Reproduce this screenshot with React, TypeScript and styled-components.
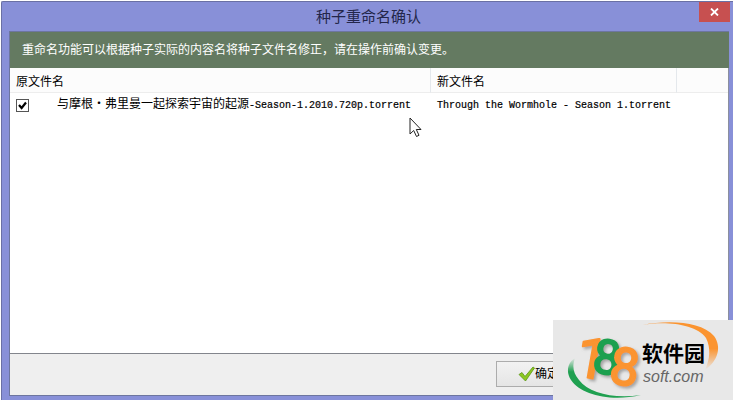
import React, { useState } from "react";
import styled, { createGlobalStyle } from "styled-components";

const GlobalStyle = createGlobalStyle`
  * { box-sizing: border-box; }
  body {
    margin: 0;
    background: #fff;
    font: 12px/16px "Liberation Sans", "Noto Sans CJK SC", sans-serif;
    color: #000;
  }
`;

const Dialog = styled.main`
  display: flex;
  flex-direction: column;
  min-height: calc(100vh - 1px);
  padding: 0 3px 4px 7px;
  background: #8890d8;
  border: 1px solid #6a70a4;
  border-width: 1px 0 0 1px;
  border-top-left-radius: 2px;
`;

const Page = styled.div`
  padding: 1px 0 0 1px;
`;

const TitleBar = styled.header`
  display: grid;
  grid-template-columns: 1fr auto 1fr;
  height: 29px;
`;

const Title = styled.h1`
  grid-column: 2;
  margin: 0;
  padding-right: 2px;
  font: 15px/28px "Noto Sans CJK SC", sans-serif;
  color: #23264a;
`;

const CloseButton = styled.button`
  justify-self: end;
  display: flex;
  align-items: center;
  justify-content: center;
  width: 31px;
  height: 20px;
  padding: 0;
  border: 0;
  background: #c75050;
`;

const Client = styled.section`
  display: flex;
  flex: 1;
  flex-direction: column;
  margin-right: 1px;
  background: #efefef;
  border: 1px solid #6d769f;
  border-width: 1px 0 1px 1px;
`;

const Notice = styled.p`
  margin: 0;
  padding: 10px 12px;
  background: #647a61;
  color: #fff;
`;

const ListArea = styled.div`
  flex: 1;
  background: #fff;
  border-right: 1px solid #8b8f9e;
  border-bottom: 1px solid #82858c;
`;

const Table = styled.table`
  width: 100%;
  table-layout: fixed;
  border-collapse: separate;
  border-spacing: 0;
`;

const Column = styled.col<{ $width?: number }>`
  width: ${({ $width }) => ($width ? `${$width}px` : "auto")};
`;

const HeadCell = styled.th<{ $last?: boolean }>`
  height: 25px;
  padding: 3px 6px 0;
  background: #fcfcfc;
  border-bottom: 1px solid #ededed;
  border-right: ${({ $last }) => ($last ? "0" : "1px solid #e4e8ec")};
  font-weight: 400;
  text-align: left;
`;

const Cell = styled.td`
  height: 24px;
  padding: 0 6px;
  white-space: nowrap;
`;

const FileLabel = styled.label`
  display: flex;
  align-items: center;
  gap: 28px;
`;

const CheckBox = styled.input`
  appearance: none;
  width: 13px;
  height: 13px;
  margin: 0;
  border: 1px solid #555;
  background: #fff;
  &:checked {
    background: url("data:image/svg+xml,%3Csvg xmlns='http://www.w3.org/2000/svg' viewBox='0 0 11 11'%3E%3Cpath d='M2 5l2.6 3L9 2.5' fill='none' stroke='%23000' stroke-width='2.2'/%3E%3C/svg%3E");
  }
`;

const Mono = styled.span`
  font: 10px/16px "Liberation Mono", monospace;
  -webkit-text-stroke: 0.2px #000;
`;

const Footer = styled.footer`
  display: flex;
  justify-content: flex-end;
  padding: 7px 148px 8px 8px;
`;

const ConfirmButton = styled.button`
  display: flex;
  align-items: center;
  justify-content: center;
  width: 85px;
  height: 26px;
  padding: 0;
  border: 1px solid #acacac;
  background: linear-gradient(#f2f2f2, #e5e5e5);
  font: inherit;
  color: #000;
`;

const Watermark = styled.aside`
  position: fixed;
  right: 0;
  bottom: 0;
  width: 180px;
  height: 80px;
  background: #e8e8e8;
`;

const Pointer = styled.svg`
  position: absolute;
  left: 409px;
  top: 117px;
  pointer-events: none;
`;

function SiteLogo() {
  return (
    <svg width="180" height="80" viewBox="0 0 180 80" role="img" aria-label="188软件园 soft.com">
      <defs>
        <linearGradient id="greenArc" x1="0" y1="0" x2="0" y2="1">
          <stop offset="0" stopColor="#1fa050" stopOpacity="0" />
          <stop offset="0.35" stopColor="#1fa050" />
        </linearGradient>
        <linearGradient id="orangeArc" x1="0" y1="0" x2="0" y2="1">
          <stop offset="0.55" stopColor="#fb9430" />
          <stop offset="1" stopColor="#fb9430" stopOpacity="0" />
        </linearGradient>
        <filter id="shade" x="-20%" y="-20%" width="150%" height="150%">
          <feDropShadow dx="2" dy="2" stdDeviation="1.5" floodColor="#777" floodOpacity="0.6" />
        </filter>
      </defs>
      <path d="M22 38C14 43 13 53 18 60C28 75 58 82 88 75C60 79 36 73 26 60C20 53 19 46 22 38Z" fill="url(#greenArc)" />
      <path d="M89 5C115 0 148 1 161 16C169 27 165 41 152 50C157 39 158 28 153 18C143 4 113 1 89 5Z" fill="url(#orangeArc)" />
      <g
        filter="url(#shade)"
        fontFamily="Roboto, sans-serif"
        fontWeight="400"
        strokeLinejoin="round"
        strokeWidth="2"
        textAnchor="middle"
      >
        <text x="39" y="58" fontSize="56" fill="#fb9430" stroke="#fb9430" transform="rotate(10 39 38)">1</text>
        <text x="54" y="54" fontSize="48" fill="#1fa050" stroke="#1fa050" transform="rotate(8 54 37)">8</text>
        <text x="72" y="65" fontSize="52" fill="#fb9430" stroke="#fb9430" transform="rotate(8 72 46)">8</text>
      </g>
      <text x="89" y="41" fontFamily="Noto Sans CJK SC, sans-serif" fontWeight="700" fontSize="21">软件园</text>
      <text x="90" y="62" fontFamily="Liberation Sans, sans-serif" fontStyle="italic" fontSize="16" fill="#666">soft.com</text>
    </svg>
  );
}

export default function App() {
  const [checked, setChecked] = useState(true);
  return (
    <Page>
      <GlobalStyle />
      <Dialog>
        <TitleBar>
          <Title>种子重命名确认</Title>
          <CloseButton aria-label="关闭">
            <svg width="9" height="8" viewBox="0 0 9 8">
              <path d="M1 .5L8 7.5M8 .5L1 7.5" stroke="#fff" strokeWidth="1.8" />
            </svg>
          </CloseButton>
        </TitleBar>
        <Client>
          <Notice>重命名功能可以根据种子实际的内容名将种子文件名修正，请在操作前确认变更。</Notice>
          <ListArea>
            <Table>
              <colgroup>
                <Column $width={421} />
                <Column $width={246} />
                <Column />
              </colgroup>
              <thead>
                <tr>
                  <HeadCell>原文件名</HeadCell>
                  <HeadCell>新文件名</HeadCell>
                  <HeadCell $last />
                </tr>
              </thead>
              <tbody>
                <tr>
                  <Cell>
                    <FileLabel>
                      <CheckBox type="checkbox" checked={checked} onChange={(e) => setChecked(e.target.checked)} />
                      <span lang="zh-CN">
                        与摩根・弗里曼一起探索宇宙的起源<Mono>-Season-1.2010.720p.torrent</Mono>
                      </span>
                    </FileLabel>
                  </Cell>
                  <Cell><Mono>Through the Wormhole - Season 1.torrent</Mono></Cell>
                  <Cell />
                </tr>
              </tbody>
            </Table>
          </ListArea>
          <Footer>
            <ConfirmButton>
              <svg width="17" height="16" viewBox="0 0 17 16">
                <path d="M1 8.5L4 6.5L7 10.5L15 1L16.5 2L7.5 15Z" fill="#8cc820" stroke="#5c9618" strokeWidth=".8" />
              </svg>
              确定
            </ConfirmButton>
          </Footer>
        </Client>
      </Dialog>
      <Watermark><SiteLogo /></Watermark>
      <Pointer width="13" height="21" viewBox="0 0 13 21">
        <path d="M1 1V17L4.7 13.5L7.5 19.5L10 18.3L7.3 12.5H12Z" fill="#fff" stroke="#222" />
      </Pointer>
    </Page>
  );
}
